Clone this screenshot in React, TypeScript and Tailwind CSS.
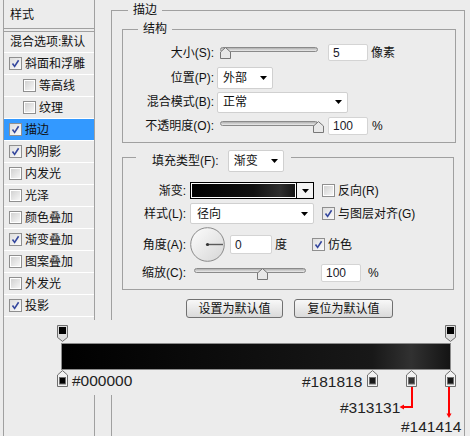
import type { ReactNode } from "react"

const styles = [
    { t: "斜面和浮雕", on: true },
    { t: "等高线", on: false, sub: true },
    { t: "纹理", on: false, sub: true },
    { t: "描边", on: true, sel: true },
    { t: "内阴影", on: true },
    { t: "内发光", on: false },
    { t: "光泽", on: false },
    { t: "颜色叠加", on: false },
    { t: "渐变叠加", on: true },
    { t: "图案叠加", on: false },
    { t: "外发光", on: false },
    { t: "投影", on: true },
]

// gradient stops, position in percent
const colorStops = [
    { pos: 0, color: "#000000" },
    { pos: 80, color: "#181818" },
    { pos: 90, color: "#313131" },
    { pos: 100, color: "#141414" },
]
const opacityStops = [0, 100]

function Check({ on }: { on: boolean }) {
    return (
        <span className="flex h-[13px] w-[13px] shrink-0 items-center justify-center border border-[#8f8f8f] bg-white">
            {on ? (
                <svg width="11" height="11" viewBox="0 0 11 11" className="bg-linear-to-br from-[#dedede] to-[#fbfbfb]">
                    <path d="M2.5 5.5 L4.6 8.4 L8.6 2.2" fill="none" stroke="#34479e" strokeWidth="1.6" />
                </svg>
            ) : (
                <span className="h-[9px] w-[9px] bg-linear-to-br from-[#d2d2d2] to-[#f6f6f6]" />
            )}
        </span>
    )
}

function Caret() {
    return (
        <svg width="7" height="4" viewBox="0 0 7 4">
            <polygon points="0,0 7,0 3.5,4" fill="#000" />
        </svg>
    )
}

function Select({ className, children }: { className: string; children: ReactNode }) {
    return (
        <div className={`flex items-center justify-between rounded-[2px] border border-[#d0d0d0] bg-white pl-[5px] pr-[5px] ${className}`}>
            <span>{children}</span>
            <Caret />
        </div>
    )
}

function Field({ className, children }: { className: string; children: ReactNode }) {
    return (
        <div className={`flex items-center rounded-[2px] border border-[#d4d4d4] bg-white pl-[4px] text-[#1a1a2a] ${className}`}>
            {children}
        </div>
    )
}

function Slider({ className, thumb }: { className: string; thumb: string }) {
    return (
        <div className={`relative h-[13px] shrink-0 ${className}`}>
            <div className="mt-[1px] h-[5px] rounded-full border border-[#8a8a8a] bg-linear-to-b from-[#b0b0b0] to-[#ececec]" />
            <svg className={`absolute top-[1px] ${thumb}`} width="11" height="12" viewBox="0 0 11 12">
                <path d="M0.5 11.5 V5 L5.5 0.6 L10.5 5 V11.5 Z" fill="#e8e8e8" stroke="#777" />
            </svg>
        </div>
    )
}

function StopUp({ color }: { color: string }) {
    return (
        <svg width="11" height="17" viewBox="0 0 11 17">
            <path d="M0.5 16.5 V5 L5.5 0.6 L10.5 5 V16.5 Z" fill="#f2f2f2" stroke="#6e6e6e" />
            <rect x="2.5" y="7.5" width="6" height="6.5" fill={color} stroke="#6e6e6e" />
        </svg>
    )
}

function StopDown() {
    return (
        <svg width="11" height="17" viewBox="0 0 11 17">
            <path d="M0.5 0.5 H10.5 V12.4 L5.5 16.4 L0.5 12.4 Z" fill="#dcdcdc" stroke="#6e6e6e" />
            <rect x="2" y="2" width="7" height="7" fill="#000" />
        </svg>
    )
}

export default function App() {
    return (
        <div className="relative flex h-[436px] w-[470px] overflow-hidden bg-[#ececec] font-['Liberation_Sans','Noto_Sans_CJK_SC',sans-serif] text-[12px] leading-[16px] text-[#111]">
            {/* style list */}
            <div className="ml-[3px] w-[92px] shrink-0 border-x border-[#a0a0a0]">
                <div className="h-[29px] border-b border-[#a0a0a0] pl-[6px] pt-[7px]">样式</div>
                <div className="mt-[2px] flex h-[22px] items-center border-y border-t-[#a0a0a0] border-b-white pl-[6px]">
                    混合选项:默认
                </div>
                {styles.map((s) => (
                    <div
                        key={s.t}
                        className={`flex h-[22px] items-center gap-[3px] border-b border-white ${s.sel ? "bg-[#3399ff]" : ""} ${s.sub ? "pl-[19px]" : "pl-[5px]"}`}
                    >
                        <Check on={s.on} />
                        <span>{s.t}</span>
                    </div>
                ))}
            </div>

            {/* stroke settings */}
            <fieldset className="mt-[2px] ml-[16px] w-[354px] shrink-0 border border-b-0 border-[#a0a0a0]">
                <legend className="ml-[16px] px-[5px] leading-[16px]">描边</legend>

                <fieldset className="mt-[3px] ml-[10px] w-[334px] border border-[#a0a0a0] pt-[3px] pb-[4px]">
                    <legend className="ml-[15px] px-[5px] leading-[16px]">结构</legend>
                    <div className="flex h-[25px] items-center">
                        <span className="w-[91px] shrink-0 text-right">大小(S):</span>
                        <Slider className="ml-[6px] w-[98px]" thumb="left-[0px]" />
                        <Field className="ml-[10px] h-[17px] w-[40px]">5</Field>
                        <span className="ml-[3px]">像素</span>
                    </div>
                    <div className="flex h-[25px] items-center">
                        <span className="w-[91px] shrink-0 text-right">位置(P):</span>
                        <Select className="ml-[3px] h-[22px] w-[56px]">外部</Select>
                    </div>
                    <div className="flex h-[24px] items-center">
                        <span className="w-[91px] shrink-0 text-right">混合模式(B):</span>
                        <Select className="ml-[3px] h-[21px] w-[131px]">正常</Select>
                    </div>
                    <div className="flex h-[24px] items-center">
                        <span className="w-[91px] shrink-0 text-right">不透明度(O):</span>
                        <Slider className="ml-[6px] w-[98px]" thumb="left-[93px]" />
                        <Field className="ml-[10px] h-[18px] w-[40px]">100</Field>
                        <span className="ml-[4px]">%</span>
                    </div>
                </fieldset>

                <fieldset className="mt-[7px] ml-[10px] w-[332px] border border-[#a0a0a0] pb-[7px]">
                    <legend className="ml-[13px] h-[14px] pl-[16px] pr-[7px]">
                        <div className="flex items-start">
                            <span className="leading-[22px]">填充类型(F):</span>
                            <Select className="ml-[9px] h-[22px] w-[56px]">渐变</Select>
                        </div>
                    </legend>

                    <div className="mt-[18px] flex h-[17px] items-center">
                        <span className="w-[63px] shrink-0 text-right">渐变:</span>
                        <div className="ml-[4px] flex h-[17px] w-[124px] border border-black bg-white">
                            <div className="m-[1px] flex-1 bg-[linear-gradient(to_right,#000_0%,#111_60%,#2e2e2e_86%,#151515_100%)]" />
                            <div className="flex w-[17px] items-center justify-center border-l border-black bg-[#f4f4f4]">
                                <Caret />
                            </div>
                        </div>
                        <span className="ml-[8px]"><Check on={false} /></span>
                        <span className="ml-[3px]">反向(R)</span>
                    </div>
                    <div className="mt-[4px] flex h-[21px] items-center">
                        <span className="w-[63px] shrink-0 text-right">样式(L):</span>
                        <Select className="ml-[4px] h-[21px] w-[124px] pl-[6px]">径向</Select>
                        <span className="ml-[8px]"><Check on={true} /></span>
                        <span className="ml-[3px]">与图层对齐(G)</span>
                    </div>
                    <div className="mt-[3px] flex h-[35px] items-center">
                        <span className="w-[63px] shrink-0 text-right">角度(A):</span>
                        <svg className="ml-[4px] shrink-0" width="35" height="35" viewBox="0 0 35 35">
                            <defs>
                                <linearGradient id="dial" x1="0" y1="0" x2="1" y2="1">
                                    <stop offset="0" stopColor="#fdfdfd" />
                                    <stop offset="1" stopColor="#d6d6d6" />
                                </linearGradient>
                            </defs>
                            <circle cx="17.5" cy="17.5" r="16.8" fill="url(#dial)" stroke="#8a8a8a" />
                            <line x1="17.5" y1="17.5" x2="33" y2="17.5" stroke="#5a5a5a" strokeWidth="1.4" />
                            <circle cx="17.5" cy="17.5" r="1.6" fill="#333" />
                        </svg>
                        <Field className="ml-[5px] h-[19px] w-[42px]">0</Field>
                        <span className="ml-[3px]">度</span>
                        <span className="ml-[25px]"><Check on={true} /></span>
                        <span className="ml-[3px]">仿色</span>
                    </div>
                    <div className="mt-[2px] flex h-[18px] items-center">
                        <span className="w-[63px] shrink-0 text-right">缩放(C):</span>
                        <Slider className="ml-[8px] w-[112px]" thumb="left-[63px]" />
                        <Field className="ml-[15px] h-[18px] w-[40px]">100</Field>
                        <span className="ml-[7px]">%</span>
                    </div>
                </fieldset>

                <div className="mt-[9px] ml-[74px] flex gap-[11px]">
                    <button className="h-[19px] w-[97px] rounded-[3px] border border-[#707070] bg-linear-to-b from-[#f8f8f8] to-[#dadada] leading-[16px]">
                        设置为默认值
                    </button>
                    <button className="h-[19px] w-[99px] rounded-[3px] border border-[#707070] bg-linear-to-b from-[#f8f8f8] to-[#dadada] leading-[16px]">
                        复位为默认值
                    </button>
                </div>
            </fieldset>

            {/* gradient editor pasted over the dialog */}
            <div className="absolute left-[30px] top-[320px] h-[116px] w-[428px] font-['Liberation_Sans',sans-serif] text-[15.5px] leading-[18px] text-[#222]">
                <div className="h-[75px] bg-[#ececec] pt-[5px]">
                    <div className="ml-[31px] w-[390px]">
                        <div className="relative h-[18px]">
                            {opacityStops.map((p) => (
                                <div key={p} className="absolute top-0" style={{ left: p * 3.88 - 4 }}>
                                    <StopDown />
                                </div>
                            ))}
                        </div>
                        <div className="h-[27px] border border-[#8c8c8c] bg-[linear-gradient(to_right,#000_0%,#181818_80%,#313131_90%,#141414_100%)]" />
                        <div className="relative h-[18px]">
                            {colorStops.map((s) => (
                                <div key={s.pos} className="absolute top-0" style={{ left: s.pos * 3.88 - 4 }}>
                                    <StopUp color={s.color} />
                                </div>
                            ))}
                            <span className="absolute left-[11px] top-[2px]">#000000</span>
                            <span className="absolute left-[241px] top-[3px]">#181818</span>
                        </div>
                    </div>
                </div>
                <span className="absolute left-[310px] top-[79px]">#313131</span>
                <span className="absolute left-[371px] top-[98px]">#141414</span>
                <svg className="pointer-events-none absolute inset-0" width="428" height="116" viewBox="0 0 428 116">
                    <path d="M382 67 V87 H373" fill="none" stroke="#ff0000" strokeWidth="2" />
                    <polygon points="369.5,87 374,84.5 374,89.5" fill="#ff0000" />
                    <path d="M419 67 V94" fill="none" stroke="#ff0000" strokeWidth="2" />
                    <polygon points="419,98 416.5,93.5 421.5,93.5" fill="#ff0000" />
                </svg>
            </div>
        </div>
    )
}
